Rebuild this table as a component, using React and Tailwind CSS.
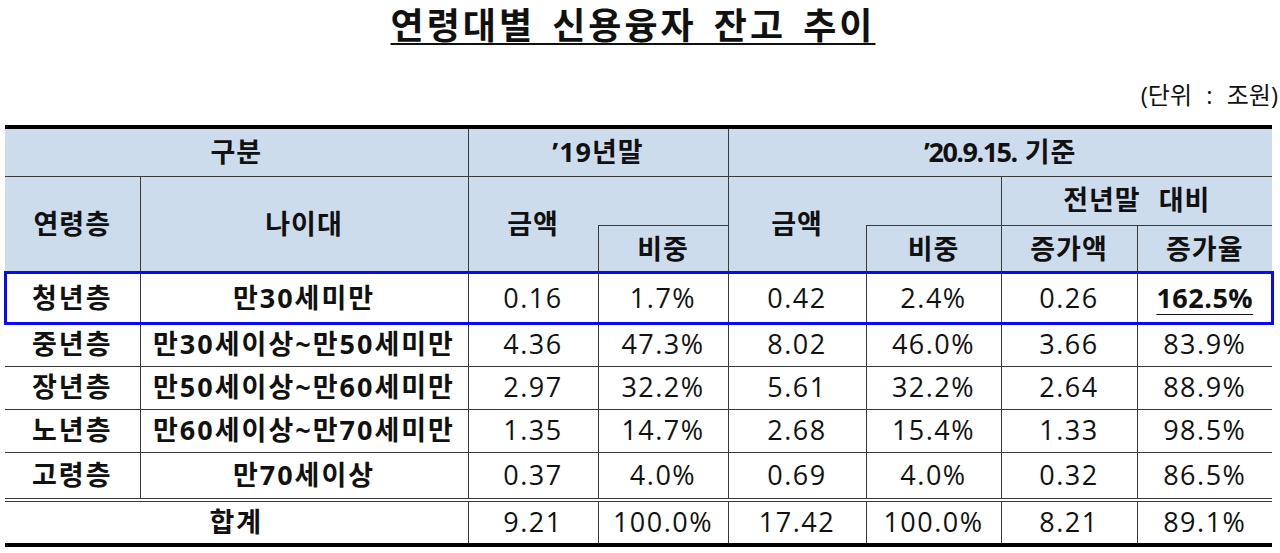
import React from "react";

const rows = [
  ["중년층", "만30세이상~만50세미만", "4.36", "47.3%", "8.02", "46.0%", "3.66", "83.9%"],
  ["장년층", "만50세이상~만60세미만", "2.97", "32.2%", "5.61", "32.2%", "2.64", "88.9%"],
  ["노년층", "만60세이상~만70세미만", "1.35", "14.7%", "2.68", "15.4%", "1.33", "98.5%"],
  ["고령층", "만70세이상", "0.37", "4.0%", "0.69", "4.0%", "0.32", "86.5%"],
];

const th = "border border-[#3a3a3a] bg-[#cddcec] font-bold text-[27px] tracking-[1px] text-center align-middle p-0";
const td = "border border-[#3a3a3a] text-center align-middle p-0";
const num = "text-[27px] font-normal tracking-[1.5px]";
const label = "text-[27px] font-bold tracking-[2px]";
const total = "border-t-4 [border-top-style:double] border-b-4 border-b-black";

export default function App() {
  return (
    <div className="w-[1280px] h-[553px] bg-white text-[#111] font-['Open_Sans','Noto_Sans_CJK_KR',sans-serif] overflow-hidden">
      <h1 className="pl-[3px] pr-[17px] text-center text-[36px] font-bold leading-[46px] tracking-[3px] font-['Noto_Sans_CJK_KR',sans-serif]">
        <span className="underline decoration-2 underline-offset-[4px] [word-spacing:6px]">
          연령대별 신용융자 잔고 추이
        </span>
      </h1>

      <p className="mt-[35px] pr-[2px] text-right text-[24px] leading-[28px] [word-spacing:8px]">
        (단위 : 조원)
      </p>

      <div className="relative ml-[5px] mt-[16px] w-[1267px]">
        <table className="w-[1267px] table-fixed border-collapse">
          <colgroup>
            <col className="w-[135px]" />
            <col className="w-[328px]" />
            <col className="w-[130px]" />
            <col className="w-[130px]" />
            <col className="w-[138px]" />
            <col className="w-[135px]" />
            <col className="w-[136px]" />
            <col className="w-[135px]" />
          </colgroup>
          <thead>
            <tr className="h-[49px]">
              <th colSpan={2} className={`${th} border-l-0 border-t-4 border-t-black`}>구분</th>
              <th colSpan={2} className={`${th} border-t-4 border-t-black`}>’19년말</th>
              <th colSpan={4} className={`${th} border-r-0 border-t-4 border-t-black`}>
                <span className="tracking-[-1.5px]">’20.9.15.</span> 기준
              </th>
            </tr>
            <tr className="h-[49px]">
              <th rowSpan={2} className={`${th} border-l-0`}>연령층</th>
              <th rowSpan={2} className={th}>나이대</th>
              <th rowSpan={2} className={`${th} border-r-0`}>금액</th>
              <th className={`${th} border-l-0 border-b-0`}></th>
              <th rowSpan={2} className={`${th} border-r-0`}>금액</th>
              <th className={`${th} border-l-0 border-b-0`}></th>
              <th colSpan={2} className={`${th} border-r-0 [word-spacing:10px]`}>전년말 대비</th>
            </tr>
            <tr className="h-[48px]">
              <th className={th}>비중</th>
              <th className={th}>비중</th>
              <th className={th}>증가액</th>
              <th className={`${th} border-r-0`}>증가율</th>
            </tr>
          </thead>
          <tbody>
            <tr className="h-[50px]">
              <td className={`${td} border-l-0 ${label}`}>청년층</td>
              <td className={`${td} ${label}`}>만30세미만</td>
              <td className={`${td} ${num}`}>0.16</td>
              <td className={`${td} ${num}`}>1.7%</td>
              <td className={`${td} ${num}`}>0.42</td>
              <td className={`${td} ${num}`}>2.4%</td>
              <td className={`${td} ${num}`}>0.26</td>
              <td className={`${td} border-r-0 text-[27px] font-bold tracking-[0.5px]`}>
                <span className="underline decoration-1 underline-offset-[6px]">162.5%</span>
              </td>
            </tr>
            {rows.map((r, i) => (
              <tr key={r[0]} className={i === 3 ? "h-[48px]" : "h-[43px]"}>
                <td className={`${td} border-l-0 ${label}`}>{r[0]}</td>
                <td className={`${td} ${label}`}>{r[1]}</td>
                {r.slice(2).map((v, j) => (
                  <td key={j} className={`${td} ${num} ${j === 5 ? "border-r-0" : ""}`}>{v}</td>
                ))}
              </tr>
            ))}
            <tr className="h-[44px]">
              <td colSpan={2} className={`${td} border-l-0 ${total} ${label}`}>합계</td>
              {["9.21", "100.0%", "17.42", "100.0%", "8.21", "89.1%"].map((v, j) => (
                <td key={j} className={`${td} ${num} ${total} ${j === 5 ? "border-r-0" : ""}`}>{v}</td>
              ))}
            </tr>
          </tbody>
        </table>
        <div className="absolute left-[-1px] top-[146px] h-[54px] w-[1270px] border-[3px] border-[#0a0af2]" />
      </div>
    </div>
  );
}
